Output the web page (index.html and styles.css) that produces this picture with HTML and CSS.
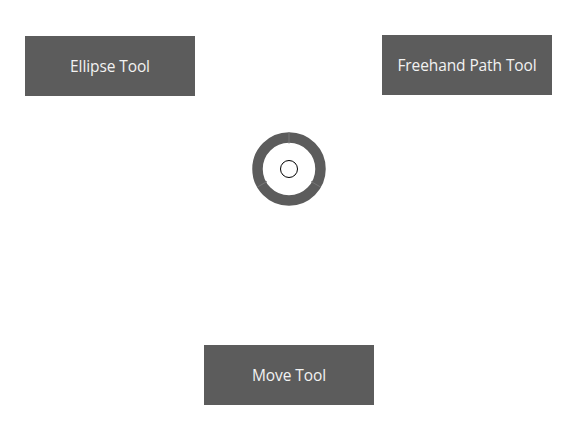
FILE: index.html
```html
<!DOCTYPE html>
<html>
<head>
<meta charset="utf-8">
<link rel="stylesheet" href="styles.css">
</head>
<body>
<div class="stage">
  <button class="tool tool-ellipse">Ellipse Tool</button>
  <button class="tool tool-freehand">Freehand Path Tool</button>
  <button class="tool tool-move">Move Tool</button>
  <svg class="ring" width="74" height="74" viewBox="0 0 74 74">
    <circle cx="37" cy="37" r="31.5" fill="none" stroke="#5c5c5c" stroke-width="10.5"/>
    <line x1="37" y1="0.5" x2="37" y2="11.5" stroke="#767676" stroke-width="1"/>
    <line x1="5.5" y1="55" x2="15" y2="49.5" stroke="#767676" stroke-width="1"/>
    <line x1="68.5" y1="55" x2="59" y2="49.5" stroke="#767676" stroke-width="1"/>
    <circle cx="37" cy="37" r="8.5" fill="#fff" stroke="#000" stroke-width="1"/>
  </svg>
</div>
</body>
</html>
```
FILE: styles.css
```css
html, body {
  margin: 0;
  padding: 0;
  background: #ffffff;
}
.stage {
  position: relative;
  width: 580px;
  height: 425px;
}
.tool {
  position: absolute;
  width: 170px;
  height: 60px;
  border: none;
  margin: 0;
  padding: 0;
  background: #5c5c5c;
  color: #f2f2f2;
  font-family: "Open Sans", "Noto Sans", sans-serif;
  font-size: 15.5px;
  letter-spacing: -0.1px;
  display: flex;
  align-items: center;
  justify-content: center;
}
.tool-ellipse { left: 25px; top: 36px; }
.tool-freehand { left: 382px; top: 35px; }
.tool-move { left: 204px; top: 345px; }
.ring {
  position: absolute;
  left: 252px;
  top: 131.5px;
}
```
